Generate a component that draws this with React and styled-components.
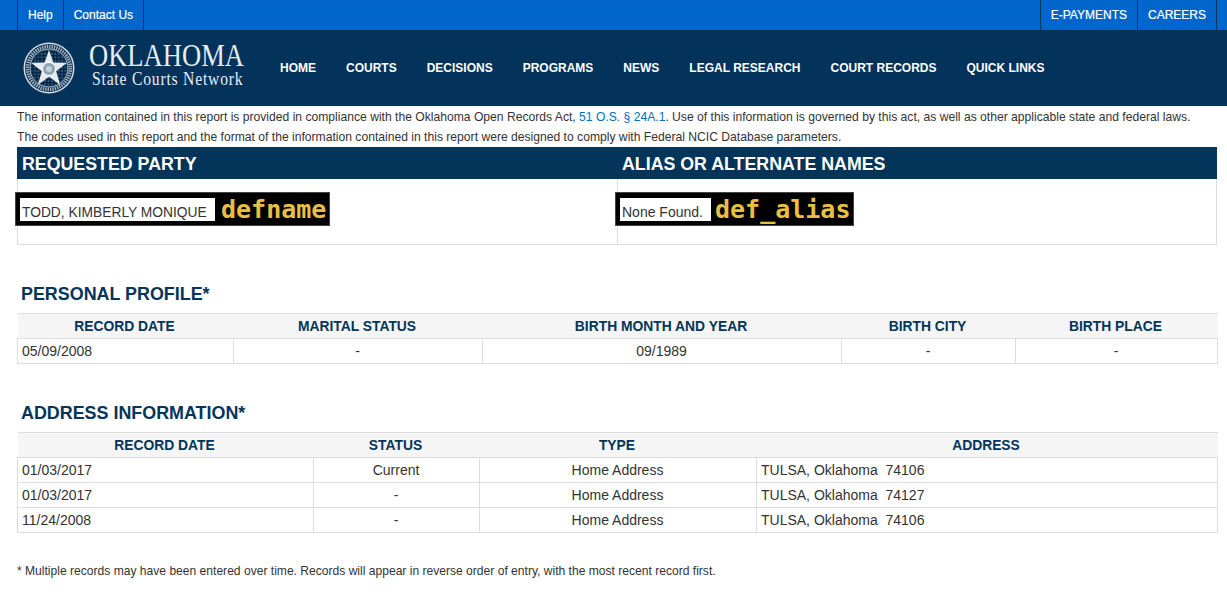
import React from "react";
import styled, { createGlobalStyle } from "styled-components";

const GlobalStyle = createGlobalStyle`
  html, body {
    margin: 0;
    padding: 0;
    background: #fff;
    font-family: "Liberation Sans", Arial, sans-serif;
    color: #333;
  }
`;

const TopBar = styled.div`
  height: 30px;
  background: #0066cc;
  display: flex;
  justify-content: space-between;
  padding: 0 10px 0 17px;
`;
const TopGroup = styled.div`
  display: flex;
  border-left: 1px solid #03325a;
`;
const TopLink = styled.a`
  display: flex;
  align-items: center;
  padding: 0 10px;
  border-right: 1px solid #03325a;
  color: #fff;
  font-size: 12px;
  -webkit-text-stroke: 0.2px #fff;
`;

const Header = styled.div`
  height: 76px;
  background: #03325a;
  display: flex;
  align-items: center;
  padding-left: 23px;
`;
const Logo = styled.div`
  display: flex;
  align-items: center;
  width: 257px;
`;
const LogoText = styled.div`
  margin: 0 0 8px 14px;
  font-family: "Liberation Serif", serif;
  color: #e8edf2;
  display: flex;
  flex-direction: column;
`;
const LogoTitle = styled.span`
  font-size: 32px;
  line-height: 30px;
  white-space: nowrap;
  transform: scaleX(0.83);
  transform-origin: left center;
`;
const LogoSub = styled.span`
  font-size: 18px;
  line-height: 19px;
  letter-spacing: 0.9px;
  margin-left: 3px;
  white-space: nowrap;
  transform: scaleX(0.87);
  transform-origin: left center;
`;
const Nav = styled.nav`
  display: flex;
  gap: 30px;
`;
const NavLink = styled.a`
  color: #fff;
  font-size: 12px;
  font-weight: 700;
`;

const Main = styled.div`
  padding: 1px 10px 0 17px;
`;
const Note = styled.p`
  margin: 0;
  height: 20px;
  font-size: 12.13px;
  line-height: 20px;
  white-space: nowrap;
`;
const LawLink = styled.a`
  color: #0070c0;
`;

const PartyGrid = styled.div`
  display: grid;
  grid-template-columns: 600px 600px;
  height: 98px;
`;
const PartyCol = styled.div`
  display: flex;
  flex-direction: column;
`;
const PartyHead = styled.div`
  height: 32px;
  background: #03355a;
  color: #fff;
  font-size: 17.8px;
  font-weight: 700;
  line-height: 34px;
  padding-left: 5px;
`;
const PartyBody = styled.div`
  flex: 1;
  border-left: 1px solid #ddd;
  border-bottom: 1px solid #ddd;
  border-right: ${(p) => (p.$last ? "1px solid #ddd" : "none")};
  padding-top: 13px;
`;
const Marked = styled.div`
  display: inline-flex;
  align-items: center;
  height: 34px;
  box-sizing: border-box;
  margin-left: -3px;
  background: #000;
  border: 1px solid #444;
  padding: 0 3px 0 4px;
`;
const MarkedValue = styled.span`
  background: #fff;
  height: 23px;
  width: ${(p) => p.$width}px;
  font-size: ${(p) => p.$size}px;
  line-height: 29px;
  padding-left: 2px;
  box-sizing: border-box;
  white-space: nowrap;
  overflow: hidden;
`;
const MarkedName = styled.span`
  font-family: "DejaVu Sans Mono", monospace;
  font-size: 25px;
  font-weight: 700;
  color: #e8c040;
  margin-left: ${(p) => p.$gap}px;
`;

const SectionTitle = styled.h2`
  margin: 37px 0 0 4px;
  height: 25px;
  color: #03355a;
  font-size: 17.9px;
  line-height: 24px;
  font-weight: 700;
`;
const Table = styled.table`
  width: 1200px;
  table-layout: fixed;
  border-collapse: collapse;
  margin-top: 6px;
`;
const Th = styled.th`
  height: 25px;
  padding: 0 2px 0 0;
  box-sizing: border-box;
  background: #f5f5f5;
  border: 1px solid #ddd;
  border-left: none;
  border-right: none;
  color: #03355a;
  font-size: 13.85px;
  font-weight: 700;
  text-align: center;
`;
const Td = styled.td`
  height: 25px;
  padding: 0 ${(p) => (p.$left ? 0 : 1)}px 0 ${(p) => (p.$left ? 4 : 0)}px;
  box-sizing: border-box;
  border: 1px solid #ddd;
  font-size: 14px;
  text-align: ${(p) => (p.$left ? "left" : "center")};
  white-space: pre;
`;
const Footnote = styled.p`
  margin: 30px 0 0;
  font-size: 12.08px;
  line-height: 16px;
  white-space: nowrap;
`;

const Seal = () => (
  <svg width="52" height="52" viewBox="0 0 52 52">
    <defs>
      <pattern id="sealDots" width="3.4" height="3.4" patternUnits="userSpaceOnUse">
        <circle cx="1.7" cy="1.7" r="0.7" fill="#8ea2b5" />
      </pattern>
    </defs>
    <circle cx="26" cy="26" r="25.5" fill="#d5dce3" />
    <circle cx="26" cy="26" r="24" fill="#03284a" />
    <circle cx="26" cy="26" r="21.5" fill="none" stroke="#a9b8c6" strokeWidth="3.5" strokeDasharray="1.4 1" />
    <circle cx="26" cy="26" r="19" fill="#03284a" stroke="#e8edf2" strokeWidth="0.8" />
    <circle cx="26" cy="26" r="18" fill="url(#sealDots)" />
    <path d="M26 8 L30.4 20.6 L44 20.8 L33.2 29.2 L37.2 43 L26 34.8 L14.8 43 L18.8 29.2 L8 20.8 L21.6 20.6 Z" fill="#e6ebef" />
    <circle cx="26" cy="27" r="6.5" fill="#8fa3b5" stroke="#fff" strokeWidth="1" />
    <circle cx="26" cy="27" r="3" fill="#c8d2db" />
  </svg>
);

const navItems = ["HOME", "COURTS", "DECISIONS", "PROGRAMS", "NEWS", "LEGAL RESEARCH", "COURT RECORDS", "QUICK LINKS"];

const addresses = [
  ["01/03/2017", "Current", "TULSA, Oklahoma  74106"],
  ["01/03/2017", "-", "TULSA, Oklahoma  74127"],
  ["11/24/2008", "-", "TULSA, Oklahoma  74106"],
];

export default function App() {
  return (
    <>
      <GlobalStyle />
      <TopBar>
        <TopGroup>
          <TopLink>Help</TopLink>
          <TopLink>Contact Us</TopLink>
        </TopGroup>
        <TopGroup>
          <TopLink>E-PAYMENTS</TopLink>
          <TopLink>CAREERS</TopLink>
        </TopGroup>
      </TopBar>
      <Header>
        <Logo>
          <Seal />
          <LogoText>
            <LogoTitle>OKLAHOMA</LogoTitle>
            <LogoSub>State Courts Network</LogoSub>
          </LogoText>
        </Logo>
        <Nav>
          {navItems.map((item) => (
            <NavLink key={item}>{item}</NavLink>
          ))}
        </Nav>
      </Header>
      <Main>
        <Note>
          The information contained in this report is provided in compliance with the Oklahoma Open Records Act,{" "}
          <LawLink>51 O.S. § 24A.1</LawLink>. Use of this information is governed by this act, as well as other applicable state and federal laws.
        </Note>
        <Note>The codes used in this report and the format of the information contained in this report were designed to comply with Federal NCIC Database parameters.</Note>
        <PartyGrid>
          <PartyCol>
            <PartyHead>REQUESTED PARTY</PartyHead>
            <PartyBody>
              <Marked>
                <MarkedValue $width={195} $size={13.8}>TODD, KIMBERLY MONIQUE</MarkedValue>
                <MarkedName $gap={6}>defname</MarkedName>
              </Marked>
            </PartyBody>
          </PartyCol>
          <PartyCol>
            <PartyHead>ALIAS OR ALTERNATE NAMES</PartyHead>
            <PartyBody $last>
              <Marked>
                <MarkedValue $width={91} $size={14}>None Found.</MarkedValue>
                <MarkedName $gap={4}>def_alias</MarkedName>
              </Marked>
            </PartyBody>
          </PartyCol>
        </PartyGrid>

        <SectionTitle>PERSONAL PROFILE*</SectionTitle>
        <Table>
          <colgroup>
            <col width="216" />
            <col width="249" />
            <col width="359" />
            <col width="174" />
            <col width="202" />
          </colgroup>
          <thead>
            <tr>
              <Th>RECORD DATE</Th>
              <Th>MARITAL STATUS</Th>
              <Th>BIRTH MONTH AND YEAR</Th>
              <Th>BIRTH CITY</Th>
              <Th>BIRTH PLACE</Th>
            </tr>
          </thead>
          <tbody>
            <tr>
              <Td $left>05/09/2008</Td>
              <Td>-</Td>
              <Td>09/1989</Td>
              <Td>-</Td>
              <Td>-</Td>
            </tr>
          </tbody>
        </Table>

        <SectionTitle>ADDRESS INFORMATION*</SectionTitle>
        <Table>
          <colgroup>
            <col width="296" />
            <col width="166" />
            <col width="277" />
            <col width="461" />
          </colgroup>
          <thead>
            <tr>
              <Th>RECORD DATE</Th>
              <Th>STATUS</Th>
              <Th>TYPE</Th>
              <Th>ADDRESS</Th>
            </tr>
          </thead>
          <tbody>
            {addresses.map((row, i) => (
              <tr key={i}>
                <Td $left>{row[0]}</Td>
                <Td>{row[1]}</Td>
                <Td>Home Address</Td>
                <Td $left>{row[2]}</Td>
              </tr>
            ))}
          </tbody>
        </Table>
        <Footnote>* Multiple records may have been entered over time. Records will appear in reverse order of entry, with the most recent record first.</Footnote>
      </Main>
    </>
  );
}
